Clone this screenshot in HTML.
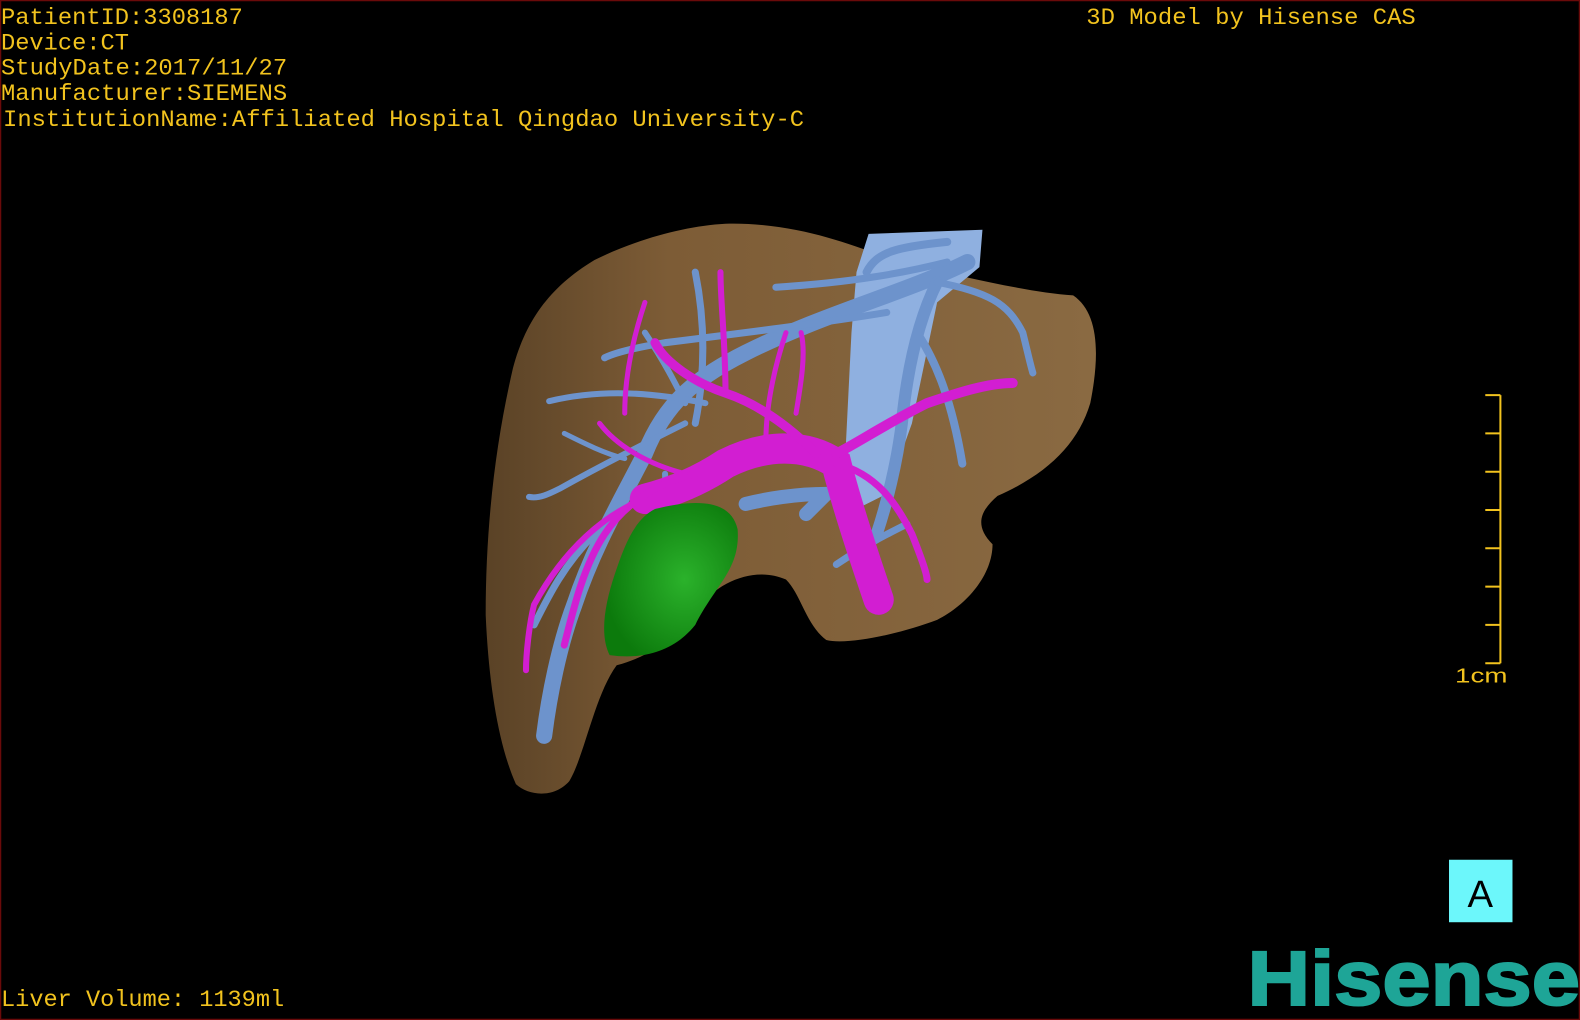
<!DOCTYPE html>
<html><head><meta charset="utf-8"><style>
html,body{margin:0;padding:0;background:#000;}
svg{display:block;}
</style></head><body>
<svg width="1580" height="1020" viewBox="0 0 1568 1012" preserveAspectRatio="none" xmlns="http://www.w3.org/2000/svg">
<rect x="0" y="0" width="1568" height="1012" fill="#000"/>
<rect x="0.5" y="0.5" width="1567" height="1011" fill="none" stroke="#6a0a0a" stroke-width="1.5"/>
<defs>
<linearGradient id="lv" x1="0" y1="0" x2="1" y2="0">
<stop offset="0" stop-color="#5a4226"/><stop offset="0.3" stop-color="#7d5c36"/><stop offset="1" stop-color="#8a6a42"/>
</linearGradient>
<radialGradient id="gb" cx="0.6" cy="0.5" r="0.6"><stop offset="0" stop-color="#2bb22b"/><stop offset="1" stop-color="#0c7a0c"/></radialGradient>
</defs>
<path d="M720,222 C800,220 860,250 900,262 C960,275 1020,290 1065,293 C1090,310 1092,350 1082,400 C1070,440 1040,470 990,492 C975,505 965,520 985,540 C985,570 960,600 930,615 C890,630 840,640 820,635 C800,620 795,590 780,575 C750,562 715,575 690,605 C670,630 650,650 612,660 C590,690 580,750 565,775 C550,792 525,790 512,778 C495,740 485,680 482,610 C482,520 492,440 508,370 C520,320 545,285 590,258 C630,238 680,224 720,222 Z" fill="url(#lv)"/>
<path d="M862,232 L975,228 L972,265 L930,300 L905,420 L880,490 L850,505 L838,470 L845,330 L850,270 Z" fill="#8fb0e0"/>
<g stroke="#6d93cc" stroke-linecap="round" fill="none">
<path d="M960,260 C900,290 820,310 740,350 C690,375 660,400 640,450 C620,490 590,540 570,600 C555,640 545,690 540,730" stroke-width="16"/>
<path d="M930,280 C910,320 900,370 895,420 C890,460 880,500 870,530" stroke-width="12"/>
<path d="M930,280 C980,290 1000,300 1015,330 C1020,350 1022,360 1025,370" stroke-width="7"/>
<path d="M910,330 C930,360 945,400 955,460" stroke-width="8"/>
<path d="M940,260 C900,270 850,280 770,285" stroke-width="7"/>
<path d="M880,310 C820,320 740,330 660,340 C630,345 610,350 600,355" stroke-width="7"/>
<path d="M700,400 C650,390 600,385 545,398" stroke-width="6"/>
<path d="M680,420 C640,440 600,460 555,485 C545,490 535,495 525,493" stroke-width="6"/>
<path d="M690,270 C700,320 700,370 690,420" stroke-width="7"/>
<path d="M640,330 C660,360 670,380 680,400" stroke-width="6"/>
<path d="M590,530 C560,560 545,590 530,620" stroke-width="7"/>
<path d="M740,500 C760,495 790,490 820,490 L800,510" stroke-width="14"/>
<path d="M830,560 C860,540 880,530 900,520" stroke-width="7"/>
<path d="M860,270 C870,250 890,245 940,240" stroke-width="8"/>
<path d="M660,470 C660,500 670,520 690,540" stroke-width="6"/>
<path d="M560,430 C580,440 600,450 620,455" stroke-width="5"/>
</g>
<g stroke="#d21ed2" stroke-linecap="round" fill="none">
<path d="M872,595 C860,560 840,500 830,460 C800,440 760,440 720,460 C690,480 660,490 640,495" stroke-width="30"/>
<path d="M830,450 C850,440 880,420 920,400 C950,390 980,380 1005,380" stroke-width="10"/>
<path d="M810,450 C780,420 750,400 720,390 C690,380 660,360 650,340" stroke-width="9"/>
<path d="M720,390 C720,340 715,300 715,270" stroke-width="6"/>
<path d="M830,460 C870,470 890,500 905,530 C915,555 920,570 920,575" stroke-width="7"/>
<path d="M690,470 C650,480 620,500 600,530 C580,560 570,600 560,640" stroke-width="7"/>
<path d="M680,470 C640,460 610,440 595,420" stroke-width="5"/>
<path d="M640,495 C600,510 560,545 530,600 C525,620 522,650 522,665" stroke-width="6"/>
<path d="M790,410 C795,380 800,350 795,330" stroke-width="5"/>
<path d="M620,410 C620,370 630,330 640,300" stroke-width="5"/>
<path d="M760,440 C760,400 770,360 780,330" stroke-width="5"/>
</g>
<path d="M650,505 C690,495 725,495 732,525 C735,565 710,580 690,620 C670,645 640,655 605,650 C595,630 600,600 610,570 C620,540 630,515 650,505 Z" fill="url(#gb)"/>
<g font-family="Liberation Mono, monospace" font-size="23" fill="#f2c31e">
<text x="1" y="24" textLength="240" lengthAdjust="spacingAndGlyphs">PatientID:3308187</text>
<text x="1" y="49" textLength="127" lengthAdjust="spacingAndGlyphs">Device:CT</text>
<text x="1" y="74" textLength="284" lengthAdjust="spacingAndGlyphs">StudyDate:2017/11/27</text>
<text x="1" y="99" textLength="284" lengthAdjust="spacingAndGlyphs">Manufacturer:SIEMENS</text>
<text x="3" y="125" textLength="795" lengthAdjust="spacingAndGlyphs">InstitutionName:Affiliated Hospital Qingdao University-C</text>
<text x="1078" y="24" textLength="327" lengthAdjust="spacingAndGlyphs">3D Model by Hisense CAS</text>
<text x="1" y="998" textLength="281" lengthAdjust="spacingAndGlyphs">Liver Volume: 1139ml</text>
</g>
<g stroke="#f2c31e" stroke-width="2" fill="none">
<path d="M1489,392 V658"/>
<path d="M1474,392H1489M1474,430H1489M1474,468H1489M1474,506H1489M1474,544H1489M1474,582H1489M1474,620H1489M1474,658H1489"/>
</g>
<text x="1444" y="677" font-family="Liberation Sans, sans-serif" font-size="20" fill="#f2c31e" textLength="52" lengthAdjust="spacingAndGlyphs">1cm</text>
<rect x="1438" y="853" width="63" height="62" fill="#6cf7fb"/>
<text x="1469" y="900" text-anchor="middle" font-family="Liberation Sans, sans-serif" font-size="38" fill="#000">A</text>
<text x="1238" y="997" font-family="Liberation Sans, sans-serif" font-weight="bold" font-size="76" fill="#1ea597" stroke="#1ea597" stroke-width="2" textLength="330" lengthAdjust="spacingAndGlyphs">Hisense</text>
</svg>
</body></html>
